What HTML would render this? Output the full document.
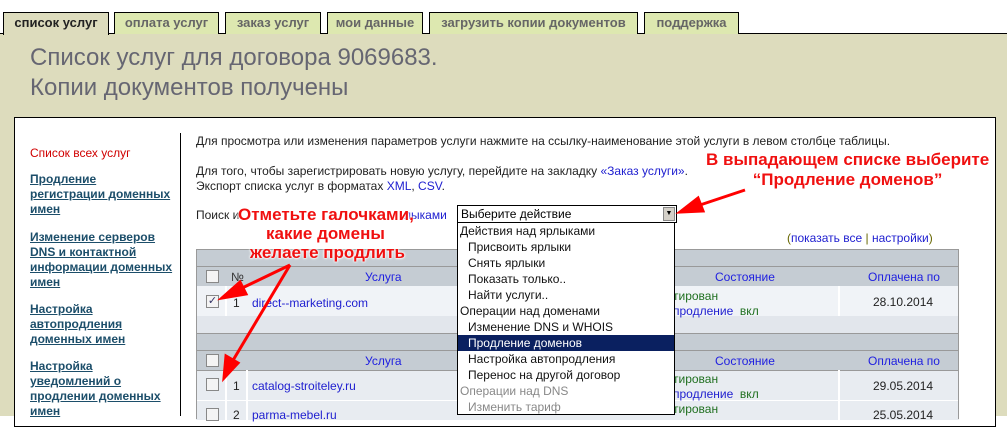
<!DOCTYPE html>
<html><head><meta charset="utf-8"><style>
*{margin:0;padding:0;box-sizing:border-box}
body{width:1007px;height:416px;overflow:hidden;background:#fff;font-family:"Liberation Sans",sans-serif;position:relative}
.abs{position:absolute}
.band{left:0;top:33px;width:1007px;height:383px;background:#dddcbd;border-top:1px solid #000}
.tab{position:absolute;top:12px;height:22px;border:1px solid #000;border-bottom:none;background:#dde8b0;color:#666;font:bold 13px "Liberation Sans",sans-serif;line-height:20px;text-align:center;white-space:nowrap;overflow:hidden}
.tab.a{background:#dddcbd;color:#222;height:23px}
h1{position:absolute;left:30px;top:43px;font:normal 24px "Liberation Sans",sans-serif;color:#666672;line-height:30px}
.panel{left:14px;top:117px;width:982px;height:310px;background:#fff;border:1px solid #000}
.side{font:bold 12px "Liberation Sans",sans-serif;color:#1c4e6a;text-decoration:underline;line-height:15px}
.t{font-size:12px;color:#222;white-space:nowrap}
a{color:#2020d0;text-decoration:none}
.row{position:absolute;left:196px;width:763px}
.cb{position:absolute;width:13px;height:13px;border:1px solid #888;background:#f4f4f4}
.hd{color:#2020e0;font-size:12px;position:absolute}
.dd{font-size:12px;color:#111;line-height:16px;padding-left:10px;white-space:nowrap}
.red{color:#f01010;font:bold 17px "Liberation Sans",sans-serif;text-shadow:0 0 2px #fff,0 0 2px #fff,0 0 3px #fff;white-space:nowrap;text-align:center;line-height:20px}
</style></head><body>
<div class="abs band"></div>
<div class="tab a" style="left:3px;width:106px">список услуг</div>
<div class="tab" style="left:114px;width:105px">оплата услуг</div>
<div class="tab" style="left:225px;width:96px">заказ услуг</div>
<div class="tab" style="left:327px;width:96px">мои данные</div>
<div class="tab" style="left:429px;width:209px">загрузить копии документов</div>
<div class="tab" style="left:644px;width:95px">поддержка</div>
<h1>Список услуг для договора 9069683.<br>Копии документов получены</h1>
<div class="abs panel"></div>
<div class="abs" style="left:180px;top:133px;width:1px;height:283px;background:#000"></div>
<div class="abs" style="left:30px;top:146px;font:12px 'Liberation Sans',sans-serif;color:#d00000">Список всех услуг</div>
<div class="abs side" style="left:30px;top:172px;width:148px">Продление<br>регистрации доменных<br>имен</div>
<div class="abs side" style="left:30px;top:230px;width:148px">Изменение серверов<br>DNS и контактной<br>информации доменных<br>имен</div>
<div class="abs side" style="left:30px;top:302px;width:148px">Настройка<br>автопродления<br>доменных имен</div>
<div class="abs side" style="left:30px;top:359px;width:148px">Настройка<br>уведомлений о<br>продлении доменных<br>имен</div>
<div class="abs t" style="left:196px;top:134px">Для просмотра или изменения параметров услуги нажмите на ссылку-наименование этой услуги в левом столбце таблицы.</div>
<div class="abs t" style="left:196px;top:164px">Для того, чтобы зарегистрировать новую услугу, перейдите на закладку <a>«Заказ услуги»</a>.</div>
<div class="abs t" style="left:196px;top:179px">Экспорт списка услуг в форматах <a>XML</a>, <a>CSV</a>.</div>
<div class="abs t" style="left:196px;top:208px">Поиск и</div>
<div class="abs t" style="left:404px;top:208px"><a>лыками</a></div>
<div class="abs t" style="left:787px;top:231px;color:#660">(<a>показать все</a> | <a>настройки</a>)</div>
<!-- table -->
<div class="row" style="top:249px;height:17px;background:#c5ccd3;border-top:1px solid #999"></div>
<div class="row" style="top:266px;height:20px;background:#c5ccd3;border-top:1px solid #999"></div>
<div class="row" style="top:286px;height:30px;background:#f0f3f7"></div>
<div class="row" style="top:316px;height:17px;background:#e2e6ec"></div>
<div class="row" style="top:333px;height:17px;background:#c5ccd3;border-top:1px solid #999"></div>
<div class="row" style="top:350px;height:20px;background:#c5ccd3;border-top:1px solid #999"></div>
<div class="row" style="top:370px;height:30px;background:#e8ecf1;border-top:1px solid #999"></div>
<div class="row" style="top:400px;height:20px;background:#e8ecf1;border-top:1px solid #fff"></div>
<div class="abs" style="left:958px;top:249px;width:1px;height:170px;background:#999"></div>
<div class="abs" style="left:196px;top:249px;width:1px;height:170px;background:#999"></div>
<div class="abs" style="left:838px;top:286px;width:2px;height:30px;background:#fff"></div>
<div class="abs" style="left:838px;top:370px;width:2px;height:50px;background:#fff"></div>
<div class="abs" style="left:225px;top:286px;width:2px;height:30px;background:#fff"></div>
<div class="abs" style="left:225px;top:370px;width:2px;height:50px;background:#fff"></div>
<div class="abs" style="left:246px;top:370px;width:2px;height:50px;background:#fff"></div>
<div class="cb" style="left:206px;top:270px"></div>
<div class="cb" style="left:206px;top:295px;font-size:11px;line-height:10px;color:#336;text-align:center">✓</div>
<div class="cb" style="left:206px;top:354px"></div>
<div class="cb" style="left:206px;top:378px"></div>
<div class="cb" style="left:206px;top:408px"></div>
<div class="hd" style="left:231px;top:270px;color:#333">№</div>
<div class="hd" style="left:365px;top:270px">Услуга</div>
<div class="hd" style="left:715px;top:270px">Состояние</div>
<div class="hd" style="left:868px;top:270px">Оплачена по</div>
<div class="hd" style="left:365px;top:354px">Услуга</div>
<div class="hd" style="left:715px;top:354px">Состояние</div>
<div class="hd" style="left:868px;top:354px">Оплачена по</div>
<div class="abs t" style="left:233px;top:296px">1</div>
<div class="abs t" style="left:252px;top:296px"><a>direct--marketing.com</a></div>
<div class="abs t" style="left:233px;top:379px">1</div>
<div class="abs t" style="left:252px;top:379px"><a>catalog-stroiteley.ru</a></div>
<div class="abs t" style="left:233px;top:408px">2</div>
<div class="abs t" style="left:252px;top:408px"><a>parma-mebel.ru</a></div>
<div class="abs t" style="left:673px;top:289px;color:#207020;line-height:15px">тирован<br><a>продление</a>&nbsp; вкл</div>
<div class="abs t" style="left:673px;top:372px;color:#207020;line-height:15px">тирован<br><a>продление</a>&nbsp; вкл</div>
<div class="abs t" style="left:673px;top:402px;color:#207020">тирован</div>
<div class="abs t" style="left:873px;top:295px">28.10.2014</div>
<div class="abs t" style="left:873px;top:379px">29.05.2014</div>
<div class="abs t" style="left:873px;top:408px">25.05.2014</div>
<!-- dropdown -->
<div class="abs" style="left:457px;top:205px;width:220px;height:18px;border:1px solid #000;background:#fff;font-size:12px;line-height:16px;padding-left:3px">Выберите действие
<div class="abs" style="right:1px;top:1px;width:12px;height:14px;background:#d4d0c8;border:1px solid #888;font-size:7px;line-height:12px;text-align:center">▼</div></div>
<div class="abs" style="left:457px;top:222px;width:218px;height:193px;border:1px solid #000;background:#fff">
<div class="dd" style="padding-left:2px">Действия над ярлыками</div>
<div class="dd">Присвоить ярлыки</div>
<div class="dd">Снять ярлыки</div>
<div class="dd">Показать только..</div>
<div class="dd">Найти услуги..</div>
<div class="dd" style="padding-left:2px">Операции над доменами</div>
<div class="dd">Изменение DNS и WHOIS</div>
<div class="dd" style="background:#0a2060;color:#fff">Продление доменов</div>
<div class="dd">Настройка автопродления</div>
<div class="dd">Перенос на другой договор</div>
<div class="dd" style="padding-left:2px;color:#888">Операции над DNS</div>
<div class="dd" style="color:#888">Изменить тариф</div>
</div>
<!-- annotations -->
<div class="abs red" style="left:238px;top:205px">Отметьте галочками,</div>
<div class="abs red" style="left:266px;top:224px">какие домены</div>
<div class="abs red" style="left:250px;top:243px">желаете продлить</div>
<div class="abs red" style="left:706px;top:150px">В выпадающем списке выберите<br>“Продление доменов”</div>
<svg class="abs" style="left:0;top:0" width="1007" height="416">
<g stroke="#f00" stroke-width="3" fill="#f00">
<line x1="290" y1="265" x2="238" y2="290"/>
<polygon points="222,298 240,282 246,294"/>
<line x1="290" y1="265" x2="232" y2="362"/>
<polygon points="224,378 226,356 238,363"/>
<line x1="745" y1="190" x2="700" y2="205"/>
<polygon points="680,212 698,198 703,211"/>
</g></svg>
</body></html>
